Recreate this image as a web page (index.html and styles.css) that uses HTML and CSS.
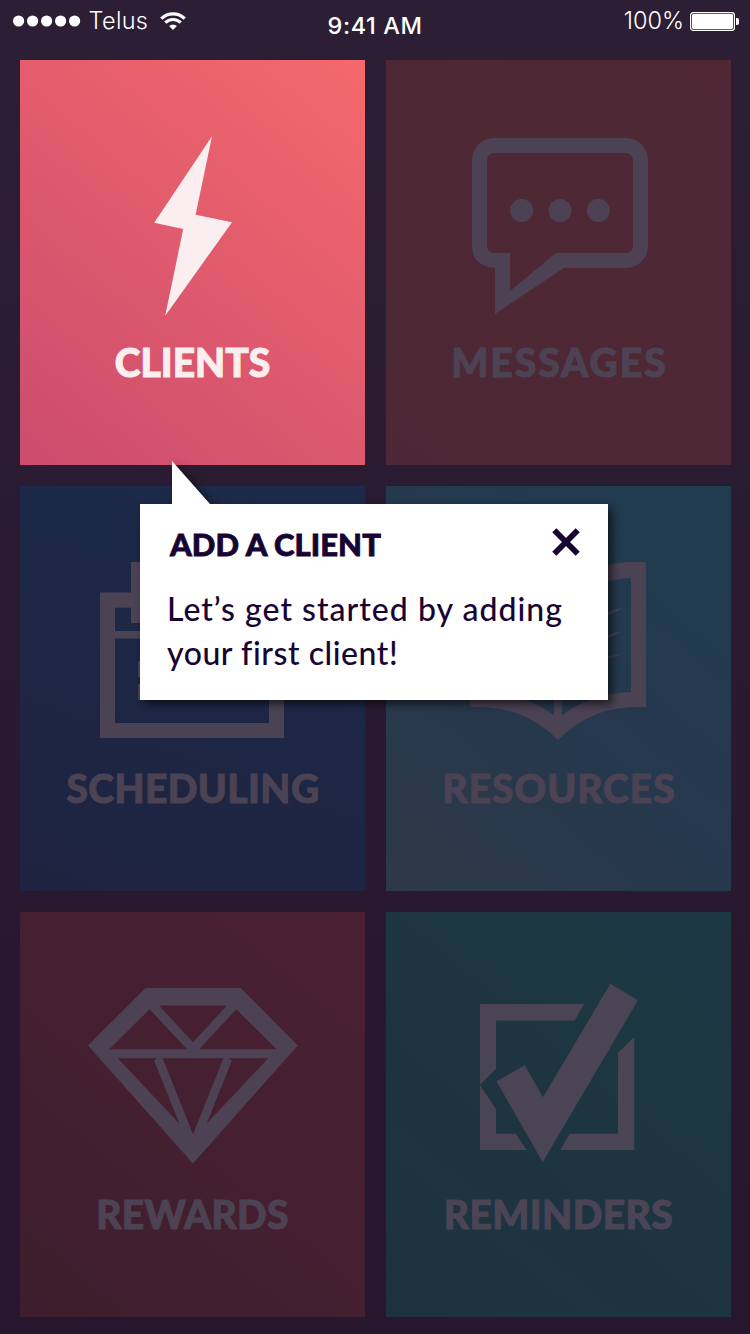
FILE: index.html
```
<!DOCTYPE html>
<html lang="en">
<head>
<meta charset="utf-8">
<title>Dashboard</title>
<link rel="stylesheet" href="styles.css">
</head>
<body>
<div class="screen">
  <header class="status">
    <div class="status-left">
      <svg class="signal" viewBox="0 0 68 12"><circle cx="5.6" cy="6" r="5.6"/><circle cx="19.6" cy="6" r="5.6"/><circle cx="33.6" cy="6" r="5.6"/><circle cx="47.6" cy="6" r="5.6"/><circle cx="61.6" cy="6" r="5.6"/></svg>
      <span class="carrier">Telus</span>
      <svg class="wifi" viewBox="0 0 26 18"><path d="M1.3 6.7a16.6 16.6 0 0 1 23.4 0" /><path d="M5.3 10.7a10.9 10.9 0 0 1 15.4 0"/><path class="wifi-dot" d="M13 18l-3.9-3.9a5.6 5.6 0 0 1 7.8 0z"/></svg>
    </div>
    <span class="time">9:41 AM</span>
    <div class="status-right">
      <span class="percent">100%</span>
      <svg class="battery" viewBox="0 0 49 19"><rect class="battery-case" x=".6" y=".6" width="43.8" height="17.8" rx="2.6"/><rect x="2" y="2" width="41" height="15" rx="1.4"/><path d="M46 6h1.2q1.8 0 1.8 1.8v3.4q0 1.8-1.8 1.8H46z"/></svg>
    </div>
  </header>

  <main class="grid">
    <section class="tile clients">
      <svg class="icon" viewBox="20 60 345 270"><path d="M212 136.3L154.2 222.8 183.2 229 165.2 315.7 232 222.3 195.6 214.7z"/></svg>
      <h2 class="label">CLIENTS</h2>
    </section>
    <section class="tile messages">
      <svg class="icon" viewBox="386 60 345 270"><path fill-rule="evenodd" d="M494 138H626A22 22 0 0 1 648 160V246A22 22 0 0 1 626 268H564L495 314V268Q472 266 472 246V160A22 22 0 0 1 494 138zM494 153A7 7 0 0 0 487 160V246A7 7 0 0 0 494 253H510V291L556 253H626A7 7 0 0 0 633 246V160A7 7 0 0 0 626 153z"/><circle cx="521.7" cy="210.6" r="11.5"/><circle cx="560" cy="210.6" r="11.5"/><circle cx="598.3" cy="210.6" r="11.5"/></svg>
      <h2 class="label">MESSAGES</h2>
    </section>
    <section class="tile scheduling">
      <svg class="icon" viewBox="20 486 345 270"><path fill-rule="evenodd" d="M100 592.5H131V562H146V592.5H238V562H253V592.5H284V738H100zM115 607.7V631H269V607.7H253V623H238V607.7H146V623H131V607.7zM115 638.5V723H269V638.5z"/><path d="M138 661h22v16h-22zM138 684h22v16h-22zM181 661h22v16h-22zM181 684h22v16h-22zM224 661h22v16h-22z"/></svg>
      <h2 class="label">SCHEDULING</h2>
    </section>
    <section class="tile resources">
      <svg class="icon" viewBox="386 486 345 270"><path fill-rule="evenodd" d="M558 592C580 572 605 562 634 562H646V707C610 706 585 714 558 740C531 714 506 706 470 707V562H482C511 562 536 572 558 592zM631 578C604 579 581 589 562 605V715.5C580 701 604 693 631 692zM485 578V692C512 693 536 701 554 715.5V605C535 589 512 579 485 578z"/><path d="M623 608Q600 612 580 622V625Q604 619 623 608zM623 631.3Q600 635 580 645V648Q604 641 623 631.3zM623 654Q600 657 580 663V666Q604 660 623 654z"/></svg>
      <h2 class="label">RESOURCES</h2>
    </section>
    <section class="tile rewards">
      <svg class="icon" viewBox="20 912 345 270"><path fill-rule="evenodd" d="M145.6 988H240.7L297.8 1045.6 193 1163.5 88 1045.6zM159 1005.5H227L193 1042.3zM149.7 1009.3L187 1049.3H109.3zM236.3 1009.3L276.7 1049.3H199zM117.7 1058.3H157.5L154 1060.3 179.3 1123.5zM268.3 1058.3H228.5L232 1060.3 206.7 1123.5zM162.7 1058.3H223.5L193 1134.2z"/></svg>
      <h2 class="label">REWARDS</h2>
    </section>
    <section class="tile reminders">
      <svg class="icon" viewBox="386 912 345 270"><path d="M480 1004H584L574.7 1020.5H496V1068.7L480 1084.7zM480 1085.3L496 1109V1133.7H515.7L526.7 1150H480zM560.3 1150L569.7 1133.7H618V1052.7L634.2 1037V1150zM610.3 983.8L638 1000.3 542.7 1162 496.5 1081.3 524.7 1065.3 543 1097.3z"/></svg>
      <h2 class="label">REMINDERS</h2>
    </section>
  </main>

  <aside class="popover">
    <svg class="pointer" viewBox="0 0 38 43"><path d="M0 0L38 43H0z"/></svg>
    <div class="popover-head">
      <h1 class="popover-title">ADD A CLIENT</h1>
      <svg class="close" viewBox="0 0 28 28"><path d="M2.3 2.3L25.7 25.7M25.7 2.3L2.3 25.7"/></svg>
    </div>
    <p class="popover-text"><span class="line-one">Let’s get started by adding</span><br><span class="line-two">your first client!</span></p>
  </aside>
</div>
</body>
</html>
```
FILE: styles.css
```
* { box-sizing: border-box; margin: 0; padding: 0; }

.screen {
  position: relative;
  width: 750px;
  height: 1334px;
  overflow: hidden;
  background: linear-gradient(#2c1e35, #26162e);
  font-family: Lato, sans-serif;
}

/* Status bar */
.status {
  display: grid;
  grid-template-columns: 1fr auto 1fr;
  height: 60px;
  padding: 0 11px 0 12.6px;
  color: #fff;
  fill: #fff;
  font-family: Inter, sans-serif;
  font-size: 23.5px;
  line-height: 42px;
}
.status-left, .status-right { display: flex; align-items: center; height: 42px; }
.status-right { justify-content: flex-end; }
.signal { width: 68px; height: 12px; }
.carrier { margin-left: 8px; font-weight: 350; letter-spacing: 0.3px; }
.wifi { width: 26px; height: 18px; margin-left: 12px; }
.wifi path { fill: none; stroke: #fff; stroke-width: 3.2; }
.wifi .wifi-dot { fill: #fff; stroke: none; }
.time { padding-top: 5px; margin-left: -1.5px; font-weight: 550; letter-spacing: 0.6px; }
.percent { font-weight: 350; }
.battery { width: 49px; height: 19px; margin-left: 6px; }
.battery-case { fill: none; stroke: #fff; stroke-width: 1.2; }

/* Tiles */
.grid {
  display: grid;
  grid-template-columns: 345px 345px;
  grid-auto-rows: 404.5px;
  gap: 21.5px 21px;
  padding-left: 20px;
}
.tile { color: #4d4253; fill: #4d4253; text-align: center; }
.icon { display: block; width: 345px; height: 270px; }
.label {
  font-size: 39px;
  font-weight: 900;
  line-height: 64px;
  white-space: nowrap;
  -webkit-text-stroke: 1px currentColor;
}

.clients { background: linear-gradient(40deg, #cb4c6e, #f5696c); color: #fbeef0; fill: #fbeef0; }
.messages { background: linear-gradient(40deg, #4c2735, #4f2834); }
.scheduling { background: linear-gradient(20deg, #1e2340, #1c2a4a); color: #4b4254; fill: #4b4254; }
.resources { background: linear-gradient(40deg, #2d3847, #26384d 45%, #203c4f); color: #4b4254; fill: #4b4254; }
.rewards { background: linear-gradient(40deg, #3e1e2c, #4a2133); }
.reminders { background: linear-gradient(40deg, #1e323e, #1c3844); color: #4b4454; fill: #4b4454; }

.messages .label { padding-left: 2px; letter-spacing: 2px; }
.scheduling .label { padding-left: 1px; letter-spacing: 0.4px; }
.resources .label { padding-left: 1px; letter-spacing: 1px; }
.rewards .label { letter-spacing: 0.2px; }
.reminders .label { letter-spacing: 0.4px; }

/* Hint popover */
.popover {
  position: absolute;
  left: 140px;
  top: 504px;
  width: 468px;
  height: 196px;
  padding: 20px 28px 0 27px;
  background: #fff;
  color: #180433;
  filter: drop-shadow(4px 4px 4px rgba(0, 0, 0, 0.6));
}
.pointer {
  position: absolute;
  left: 32px;
  top: -43px;
  width: 38px;
  height: 43px;
  fill: #fff;
}
.popover-head {
  display: flex;
  justify-content: space-between;
  align-items: flex-start;
  height: 63px;
  padding-left: 3px;
}
.popover-title {
  font-size: 31px;
  font-weight: 900;
  line-height: 40px;
  letter-spacing: 0.1px;
  white-space: nowrap;
  -webkit-text-stroke: 0.8px currentColor;
}
.close { width: 28px; height: 28px; margin-top: 4px; }
.close path { stroke: #180433; stroke-width: 5.8; }
.popover-text { font-size: 32px; font-weight: 500; line-height: 44px; white-space: nowrap; }
.line-one { letter-spacing: 1.02px; }
.line-two { letter-spacing: 0.55px; }
```
